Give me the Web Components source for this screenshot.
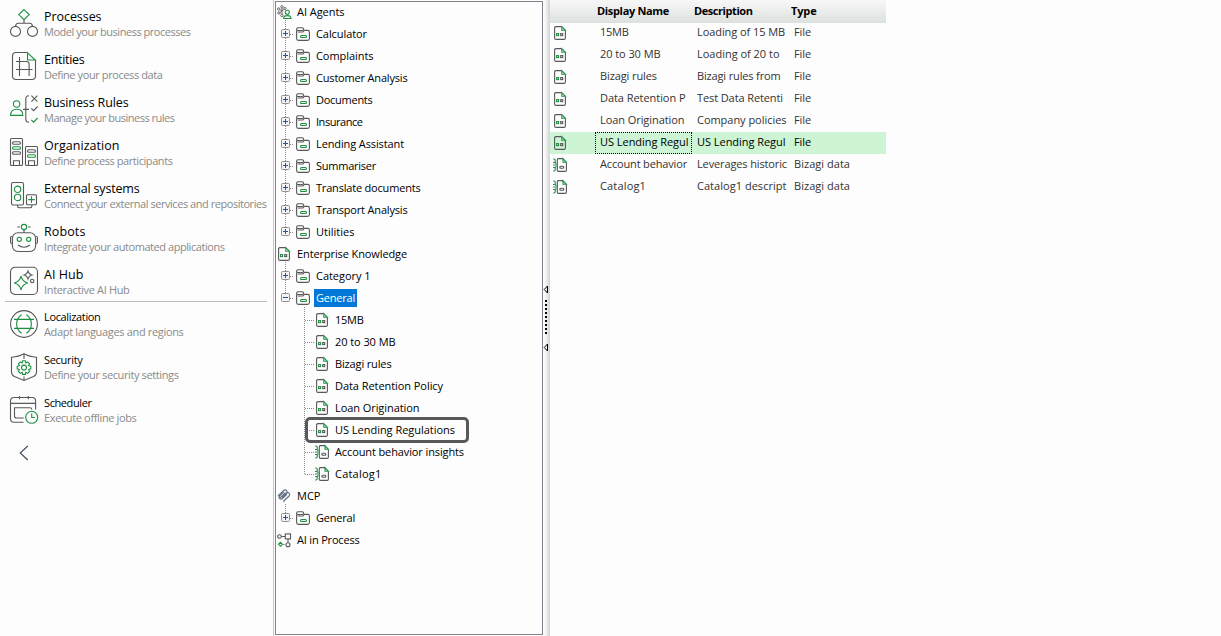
<!DOCTYPE html>
<html lang="en">
<head>
<meta charset="utf-8">
<title>Bizagi Studio</title>
<style>
    body {
        margin: 0;
        height: 636px;
        overflow: hidden;
        background: #fdfdfd;
        color: #000;
        font-family: "Open Sans", "Noto Sans", sans-serif;
        font-size: 11px;
    }
</style>
</head>
<body>
<studio-app></studio-app>

<script>
// ---- icons -------------------------------------------------------------
// stroke is dark grey by default, class "g" makes it green
const icons = {
    processes: [28, 28, `<path class="g" d="M14 .6 19.2 5.6 14 10.7 8.8 5.6z"/><path d="M14 11v3.3M5.6 17.3q0-3 3-3h10.8q3 0 3 3"/><circle cx="5.5" cy="22.4" r="5"/><circle cx="22.5" cy="22.4" r="5"/>`],
    entities: [28, 28, `<path d="M17 .5H6Q2.5.5 2.5 4v20q0 3.5 3.5 3.5h16q3.5 0 3.5-3.5V8"/><path class="g" d="M17.5.8 25.3 8h-7.8z"/><path d="M9.5 5v19M6 9.5h10.5q2.6 0 2.6 2.6V24M6 17.5h16.5"/>`],
    rules: [28, 28, `<circle class="g" cx="6.6" cy="9" r="3.2"/><path class="g" d="M.6 20.4q0-6.2 6.2-6.2t6 6.2z"/><path d="M19 .8q-3.2 0-3.2 3v20.4q0 3 3.2 3M13 14.4h6M21.4.6l6 6M27.4.6l-6 6M21.3 13.4l2.3 2.3 4-4.2"/><path class="g" d="M21.3 24.9l2.3 2.3 4-4.2"/>`],
    organization: [28, 28, `<rect x=".5" y=".5" width="12" height="27" rx="1"/><rect x="15.5" y="8.5" width="12" height="19" rx="1"/><rect x="2.5" y="3.7" width="8" height="2.6" rx="1.3"/><rect class="g" x="2.5" y="8.7" width="8" height="2.6" rx="1.3"/><rect x="2.5" y="13.7" width="8" height="2.6" rx="1.3"/><path d="M3.5 27.5v-4.8h6v4.8M18.5 27.5v-4.8h6v4.8"/><rect x="17.5" y="11.7" width="8" height="2.6" rx="1.3"/><rect class="g" x="17.5" y="16.7" width="8" height="2.6" rx="1.3"/>`],
    external: [28, 28, `<rect x="1.5" y="1.5" width="12" height="22.5" rx="1.5"/><circle class="g" cx="7.6" cy="8.3" r="3.2"/><circle class="g" cx="7.6" cy="16.4" r="3.2"/><rect x="16.5" y="13.7" width="10" height="10" rx="1"/><path class="g" d="M21.5 15.3v6.6M18.2 18.6h6.6"/><path d="M7.5 24v1q0 1.7 1.7 1.7h11q1.7 0 1.7-1.7v-1"/>`],
    robots: [28, 28, `<circle class="g" cx="14" cy="3" r="2.6"/><path d="M7.3 3h2.8M17.9 3h2.8M14 5.8v3M1.9 12.2Q.6 12.2.6 14v4q0 1.8 1.3 1.8M26.1 12.2q1.3 0 1.3 1.8v4q0 1.8-1.3 1.8"/><rect x="2.4" y="8.7" width="23.2" height="18.8" rx="5.5"/><circle class="g" cx="9.3" cy="15.3" r="2.1"/><circle class="g" cx="18.7" cy="15.3" r="2.1"/><path d="M8 21q6 4.5 12 0"/>`],
    hub: [28, 28, `<rect x=".5" y=".3" width="27" height="27.2" rx="4.5"/><path class="g" d="M11 9.2Q12.3 14.7 17.8 16 12.3 17.3 11 22.8 9.7 17.3 4.2 16 9.7 14.7 11 9.2z"/><path d="M18 4.2Q18.8 7.2 21.8 8 18.8 8.8 18 11.8 17.2 8.8 14.2 8 17.2 7.2 18 4.2z"/><circle cx="22.2" cy="14" r="1.7"/>`],
    localization: [28, 28, `<circle cx="14" cy="14" r="13.4"/><path class="g" d="M4 9.4h20M4 18.4h20M11.6 4.7Q6.6 8.2 6.6 14t5 9.3M16.4 4.7q5 3.5 5 9.3t-5 9.3"/>`],
    security: [28, 28, `<path d="M14 .8Q9 3.8 1.5 4.2V19.5Q1.5 22 4.5 23.6L14 27.4l9.5-3.8q3-1.6 3-4.1V4.2Q19 3.8 14 .8zM14 .8v5.2M14 23.5v4"/><circle class="g" cx="14" cy="14.6" r="2.5"/><path class="g" d="M12.7 7.8h2.6l.5 2.1 1.9-1 1.9 1.9-1 1.9 2.2.6v2.6l-2.2.6 1 1.9-1.9 1.9-1.9-1-.5 2.1h-2.6l-.5-2.1-1.9 1-1.9-1.9 1-1.9-2.2-.6v-2.6l2.2-.6-1-1.9 1.9-1.9 1.9 1z"/>`],
    scheduler: [28, 28, `<path d="M13.5 26.3H4Q.5 26.3.5 22.8V5Q.5 1.5 4 1.5h18q3.6 0 3.6 3.5v8.5M.5 7.4h25M9.5 0v3.2M18.3 0v3.2M13.8 22H6.5q-2 0-2-2v-8.3H20q1.7 0 1.7 1.8"/><circle class="g" cx="21.7" cy="21.3" r="6"/><path class="g" d="M21.7 17.5v4h3.2"/>`],
    back: [10, 16, `<path style="stroke:#3f4a5c" d="M8.8 1 1.2 8l7.6 7"/>`],
    folder: [14, 14, `<path d="M.6 3.3V11.5q0 1.9 1.9 1.9h9q1.9 0 1.9-1.9V5q0-1.6-1.6-1.6H8.2L7 5H1.7"/><rect x=".6" y=".7" width="7" height="2.8" rx="1.4"/><rect class="g" x="4.5" y="8.5" width="6" height="2" rx="1"/>`],
    file: [12, 14, `<path d="M7.5.6H2Q.6.6.6 2v10q0 1.4 1.4 1.4h8q1.4 0 1.4-1.4V4.5"/><path class="g" d="M7.8.6l3.6 3.7H7.8z"/><rect class="g" x="2.6" y="7.6" width="2" height="2"/><rect x="6.7" y="7.6" width="2" height="2"/>`],
    data: [14, 14, `<path d="M10 .6H5.2Q4.3.6 4.3 1.8v10.4q0 1.2 1.2 1.2h6.7q1.2 0 1.2-1.2V4.5"/><path class="g" d="M10 .6l3.4 3.7H10zM.2 1h.8q1.2 0 1.2 1.2v2.3q0 1 1.3 1M.2 13h.8q1.2 0 1.2-1.2V9.500q0-1 1.300-1M0 7h3.800M0 4.500h2M0 9.500h2"/><rect x="6.8" y="8.2" width="4" height="2" rx="1"/>`],
    agents: [14, 15, `<g stroke-width=".9"><circle cx="5" cy="1.8" r="1.2"/><circle cx="1.7" cy="4" r="1.2"/><circle cx="8" cy="3.5" r="1.1"/><circle cx="1.9" cy="8" r="1.2"/><circle cx="4.9" cy="10.5" r="1.2"/><path d="M5 3v6M2.8 4.5 5 6l2.2-1.8M3 7.5 5 6"/></g><circle class="g" cx="10.3" cy="7.3" r="2"/><path class="g" d="M6.6 13.5q0-2.9 3.7-2.9t3.7 2.9z"/>`],
    mcp: [14, 14, `<g style="stroke:#667286" stroke-width="1.2"><path d="M1 7 6.7 1.5q1.5-1.2 2.8 0t0 2.7L5 8.5M3 9l5.6-5.4M5 8.5 9.5 4.2q1.5-1.2 2.6 0t0 2.8L7.2 11.5q-.8.8 0 1.5M6.8 2.8 2.7 6.9q-1.3 1.5 0 2.6t2.7 0L9.7 5.5"/></g>`],
    process: [14, 15, `<circle cx="2.5" cy="3.5" r="1.8"/><rect x="8.3" y=".9" width="5.2" height="5"/><path d="M4.3 3.5h4M11 6v3.5"/><circle cx="11" cy="11.8" r="2"/><path class="g" d="M3.5 9.3l2 2-2 2-2-2z"/><path d="M6.5 11.5h2" stroke-dasharray="1 1"/>`]
};

class StudioIcon extends HTMLElement{
    connectedCallback(){
        if (this.shadowRoot) return;
        const [w, h, paths] = icons[this.getAttribute('name')];
        this.attachShadow({mode: 'open'}).innerHTML = `
            <style>
                :host { display: block; flex: none; width: ${w}px; height: ${h}px; }
                svg { display: block; fill: none; stroke: #585858; stroke-width: 1.1; overflow: visible; }
                .g { stroke: #1d8f42; }
            </style>
            <svg width="${w}" height="${h}" viewBox="0 0 ${w} ${h}">${paths}</svg>`;
    }
}
customElements.define('studio-icon', StudioIcon);

// Label that tracks its letters so that it takes exactly "w" pixels
class FitText extends HTMLElement{
    connectedCallback(){
        if (this.shadowRoot) return;
        this.attachShadow({mode: 'open'}).innerHTML = `
            <style>:host { display: inline-block; justify-self: start; white-space: nowrap; }</style><slot></slot>`;
        const wanted = parseFloat(this.getAttribute('w')) - 0.5;
        const natural = this.getBoundingClientRect().width;
        if (wanted && natural){
            this.style.letterSpacing = ((wanted - natural) / this.textContent.length) + 'px';
        }
    }
}
customElements.define('fit-text', FitText);

// ---- left navigation ---------------------------------------------------
class NavItem extends HTMLElement{
    connectedCallback(){
        const get = (name) => this.getAttribute(name);
        this.attachShadow({mode: 'open'}).innerHTML = `
            <style>
                :host { display: flex; gap: 6px; height: 43px; padding: 8px 0 0 10px; box-sizing: border-box; }
                .text { display: flex; flex-direction: column; margin-top: -1px; }
                .title { font-size: 12.5px; line-height: 17px; height: 17px; }
                .sub { font-size: 11px; line-height: 14px; color: #8a8a8a; }
                :host([small]) .title { font-size: 11px; line-height: 15px; height: 16px; }
            </style>
            <studio-icon name="${get('icon')}"></studio-icon>
            <div class="text">
                <div class="title"><fit-text w="${get('tw')}">${get('title-text')}</fit-text></div>
                <div class="sub"><fit-text w="${get('sw')}">${get('sub')}</fit-text></div>
            </div>`;
    }
}
customElements.define('nav-item', NavItem);

class SideNav extends HTMLElement{
    connectedCallback(){
        const item = ([icon, title, tw, sub, sw], small) =>
            `<nav-item icon="${icon}" title-text="${title}" tw="${tw}" sub="${sub}" sw="${sw}" ${small ? 'small' : ''}></nav-item>`;
        const main = [
            ['processes', 'Processes', 58, 'Model your business processes', 147],
            ['entities', 'Entities', 41, 'Define your process data', 119],
            ['rules', 'Business Rules', 85, 'Manage your business rules', 131],
            ['organization', 'Organization', 76, 'Define process participants', 129],
            ['external', 'External systems', 96, 'Connect your external services and repositories', 223],
            ['robots', 'Robots', 42, 'Integrate your automated applications', 181],
            ['hub', 'AI Hub', 40, 'Interactive AI Hub', 86]
        ];
        const extra = [
            ['localization', 'Localization', 57, 'Adapt languages and regions', 140],
            ['security', 'Security', 39, 'Define your security settings', 135],
            ['scheduler', 'Scheduler', 48, 'Execute offline jobs', 93]
        ];
        this.attachShadow({mode: 'open'}).innerHTML = `
            <style>
                :host { display: block; width: 274px; flex: none; padding-top: 1px; box-sizing: border-box; border-right: 1px solid #c6c6c6; }
                hr { height: 1px; margin: -1px 6px 0 5px; border: 0; background: #bdbdbd; }
                .back { padding: 14px 0 0 19px; }
            </style>
            ${main.map(i => item(i, false)).join('')}
            <hr>
            ${extra.map(i => item(i, true)).join('')}
            <div class="back"><studio-icon name="back"></studio-icon></div>`;
    }
}
customElements.define('side-nav', SideNav);

// ---- tree --------------------------------------------------------------
class TreeRow extends HTMLElement{
    connectedCallback(){
        const level = Number(this.getAttribute('level'));
        const icon = this.getAttribute('icon');
        const last = this.hasAttribute('last');
        const expander = this.getAttribute('expander');
        let guide = '';
        let width = 0;
        if (level === 1){
            width = 19;
            guide = `<path class="dots" d="M9.5 -3V${last ? 11 : 22}M14 11.5H18"/>
                <rect x="5.5" y="6.5" width="8" height="8" rx="1" fill="#f3f3f3" stroke="#8f8f8f"/>
                <path stroke="#30508f" d="M7 10.5h5${expander === '-' ? '' : 'M9.5 8v5'}"/>`;
        }
        if (level === 2){
            width = 38;
            guide = `<path class="dots" d="M28.5 ${this.hasAttribute('first') ? -2 : 0}V${last ? 11 : 22}M29 11.5h9"/>`;
        }
        this.attachShadow({mode: 'open'}).innerHTML = `
            <style>
                :host { display: flex; align-items: center; height: 22px; position: relative; }
                svg { flex: none; overflow: visible; fill: none; }
                .dots { stroke: #8c8c8c; stroke-dasharray: 1 1; }
                .icon { flex: none; display: flex; justify-content: center; width: 16px; }
                .label { margin-left: 3px; padding: 0 2px; height: 18px; line-height: 17px; }
                :host([selected]) .label { background: #0078d7; color: #fff; }
                .frame { position: absolute; left: 29px; top: -2px; width: 158px; height: 20px; border: 3px solid #58595b; border-radius: 5px; }
            </style>
            ${width ? `<svg width="${width}" height="22">${guide}</svg>` : ''}
            <div class="icon"><studio-icon name="${icon}"></studio-icon></div>
            <div class="label"><fit-text w="${this.getAttribute('w')}">${this.getAttribute('label')}</fit-text></div>
            ${this.hasAttribute('framed') ? '<div class="frame"></div>' : ''}`;
    }
}
customElements.define('tree-row', TreeRow);

class ExpertTree extends HTMLElement{
    connectedCallback(){
        // level, icon, label, width, flags
        const rows = [
            [0, 'agents', 'AI Agents', 48],
            [1, 'folder', 'Calculator', 51.5],
            [1, 'folder', 'Complaints', 58],
            [1, 'folder', 'Customer Analysis', 92],
            [1, 'folder', 'Documents', 57],
            [1, 'folder', 'Insurance', 47],
            [1, 'folder', 'Lending Assistant', 88.5],
            [1, 'folder', 'Summariser', 60.5],
            [1, 'folder', 'Translate documents', 105],
            [1, 'folder', 'Transport Analysis', 92],
            [1, 'folder', 'Utilities', 39, 'last'],
            [0, 'file', 'Enterprise Knowledge', 110.5],
            [1, 'folder', 'Category 1', 55],
            [1, 'folder', 'General', 39.5, 'last selected expander="-"'],
            [2, 'file', '15MB', 29, 'first'],
            [2, 'file', '20 to 30 MB', 61],
            [2, 'file', 'Bizagi rules', 57],
            [2, 'file', 'Data Retention Policy', 108.5],
            [2, 'file', 'Loan Origination', 85],
            [2, 'file', 'US Lending Regulations', 120.5, 'framed'],
            [2, 'data', 'Account behavior insights', 129.5],
            [2, 'data', 'Catalog1', 47, 'last'],
            [0, 'mcp', 'MCP', 24],
            [1, 'folder', 'General', 39.5, 'last'],
            [0, 'process', 'AI in Process', 63]
        ];
        this.attachShadow({mode: 'open'}).innerHTML = `
            <style>
                :host { display: block; flex: none; width: 268px; height: 634px; margin: 1px 0 0 1px; box-sizing: border-box; border: 1px solid #7f828b; }
                .rows { margin-top: -1px; }
            </style>
            <div class="rows">${rows.map(([level, icon, label, w, flags]) =>
                `<tree-row level="${level}" icon="${icon}" label="${label}" w="${w}" ${flags || ''}></tree-row>`).join('')}</div>`;
    }
}
customElements.define('expert-tree', ExpertTree);

// ---- splitter ----------------------------------------------------------
class PaneSplitter extends HTMLElement{
    connectedCallback(){
        this.attachShadow({mode: 'open'}).innerHTML = `
            <style>
                :host { display: flex; flex-direction: column; justify-content: center; flex: none; width: 7px; background: linear-gradient(90deg, #fdfdfd 15%, #ededed 50%, #d2d2d2); }
                svg { display: block; }
            </style>
            <svg width="7" height="68" viewBox="0 0 7 68" fill="none" stroke="#000">
                <path d="M4.5 2v7L1.2 5.5z"/>
                <path d="M3 16v34" stroke-width="2" stroke-dasharray="2 2"/>
                <path d="M4.5 60v7L1.2 63.5z"/>
            </svg>`;
    }
}
customElements.define('pane-splitter', PaneSplitter);

// ---- table -------------------------------------------------------------
class KnowledgeTable extends HTMLElement{
    connectedCallback(){
        const rows = [
            ['file', '15MB', 29, 'Loading of 15 MB', 88.5, 'File', 17.5],
            ['file', '20 to 30 MB', 61, 'Loading of 20 to', 83, 'File', 17.5],
            ['file', 'Bizagi rules', 57.5, 'Bizagi rules from', 84, 'File', 17.5],
            ['file', 'Data Retention P', 86, 'Test Data Retenti', 86.5, 'File', 17.5],
            ['file', 'Loan Origination', 85, 'Company policies', 90, 'File', 17.5],
            ['file', 'US Lending Regul', 89, 'US Lending Regul', 89, 'File', 17.5],
            ['data', 'Account behavior', 87.5, 'Leverages historic', 90.5, 'Bizagi data', 56.5],
            ['data', 'Catalog1', 46.5, 'Catalog1 descript', 90, 'Bizagi data', 56.5]
        ];
        this.attachShadow({mode: 'open'}).innerHTML = `
            <style>
                :host { display: block; width: 336px; flex: none; }
                .head, .row { display: grid; grid-template-columns: 45px 97px 97px 97px; }
                .head { height: 23px; margin-bottom: -1px; line-height: 22px; font-weight: bold; background: linear-gradient(#f7f7f7, #eceeec 45%, #dbe1de); }
                .head fit-text { margin-left: 2px; }
                .row { height: 22px; line-height: 20px; color: #333; }
                .row studio-icon { margin: 4px 0 0 4px; }
                .row studio-icon[name=data] { margin-left: 3px; }
                .cell { padding-left: 5px; }
                .active { background: #ccf4d5; color: #000; }
                .active .name { outline: 1px dotted #000; outline-offset: -1px; }
            </style>
            <div class="head"><span></span><fit-text w="72.5">Display Name</fit-text><fit-text w="59">Description</fit-text><fit-text w="26">Type</fit-text></div>
            ${rows.map(([icon, name, nw, desc, dw, type, yw], i) => `
                <div class="row ${i === 5 ? 'active' : ''}">
                    <studio-icon name="${icon}"></studio-icon>
                    <div class="cell name"><fit-text w="${nw}">${name}</fit-text></div>
                    <div class="cell"><fit-text w="${dw}">${desc}</fit-text></div>
                    <div class="cell"><fit-text w="${yw}">${type}</fit-text></div>
                </div>`).join('')}`;
    }
}
customElements.define('knowledge-table', KnowledgeTable);

class StudioApp extends HTMLElement{
    connectedCallback(){
        this.attachShadow({mode: 'open'}).innerHTML = `
            <style>:host { display: flex; height: 636px; }</style>
            <side-nav></side-nav>
            <expert-tree></expert-tree>
            <pane-splitter></pane-splitter>
            <knowledge-table></knowledge-table>`;
    }
}
customElements.define('studio-app', StudioApp);
</script>
</body>
</html>
